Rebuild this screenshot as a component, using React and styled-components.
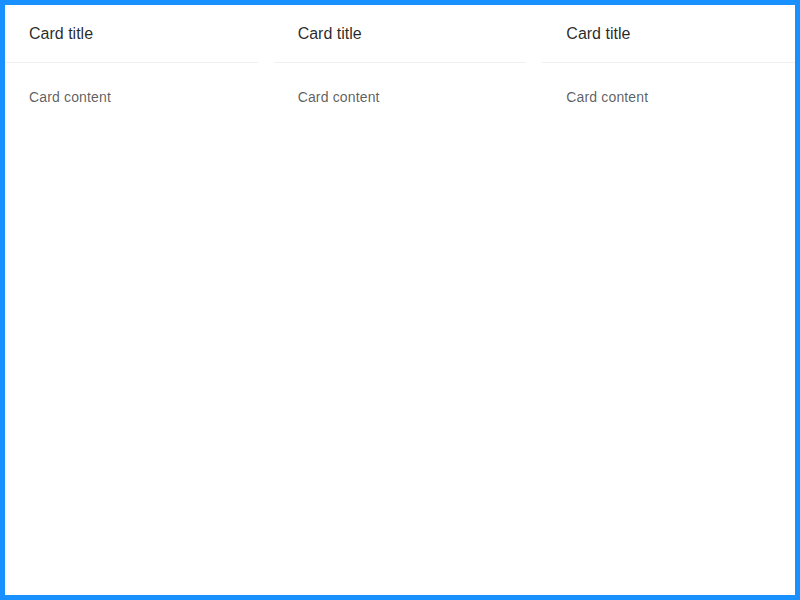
import React from "react";
import styled, { createGlobalStyle } from "styled-components";

const Global = createGlobalStyle`
  html, body { margin: 0; padding: 0; background: #fff; }
  body { font-family: "Liberation Sans", Arial, sans-serif; }
  * { box-sizing: border-box; }
`;

const Frame = styled.div`
  height: 600px;
  border: 5px solid #1890ff;
  background: #fff;
  overflow: hidden;
`;

const Row = styled.div`
  display: grid;
  grid-template-columns: repeat(3, 1fr);
  column-gap: 16px;
`;

const Card = styled.div`
  background: #fff;
  font-size: 14px;
  line-height: 1.5715;
  color: rgba(0, 0, 0, 0.85);
`;

const Head = styled.div`
  min-height: 48px;
  padding: 0 24px;
  border-bottom: 1px solid #f0f0f0;
  font-size: 16px;
  font-weight: 500;
  color: rgba(0, 0, 0, 0.85);
`;

const Title = styled.div`
  padding: 16px 0;
  line-height: 1.5715;
  white-space: nowrap;
  overflow: hidden;
  text-overflow: ellipsis;
`;

const Body = styled.div`
  padding: 23px 24px 24px;
  line-height: 1.5715;
  letter-spacing: 0.15px;
  color: rgba(0, 0, 0, 0.65);
`;

const cards = [1, 2, 3];

export default function App() {
  return (
    <>
      <Global />
      <Frame>
        <Row>
          {cards.map((c) => (
            <Card key={c}>
              <Head>
                <Title>Card title</Title>
              </Head>
              <Body>Card content</Body>
            </Card>
          ))}
        </Row>
      </Frame>
    </>
  );
}
